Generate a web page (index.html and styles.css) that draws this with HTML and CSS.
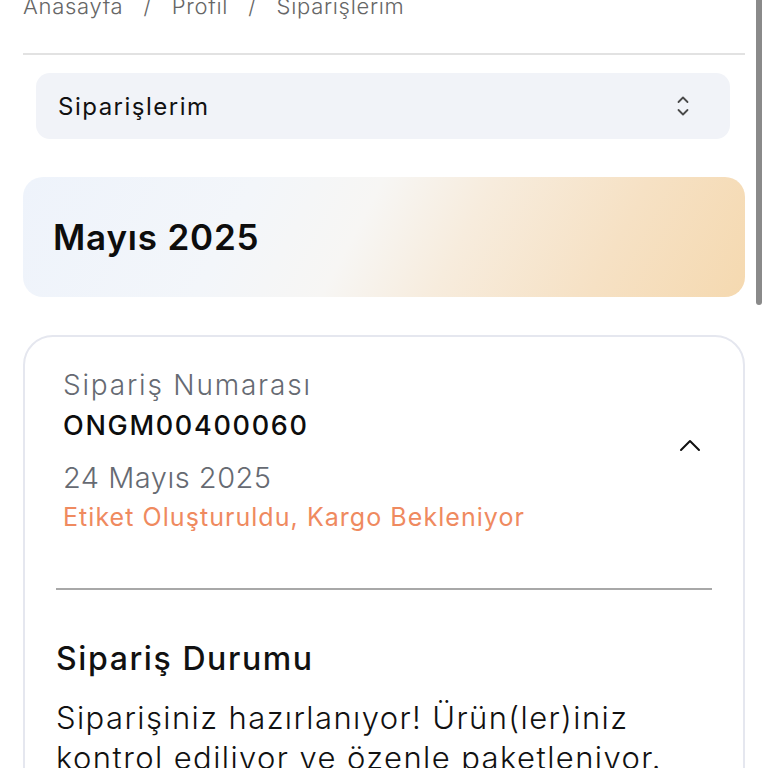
FILE: index.html
```html
<!DOCTYPE html>
<html lang="tr">
<head>
<meta charset="utf-8">
<title>Siparişlerim</title>
<link rel="stylesheet" href="styles.css">
</head>
<body>
<div class="page">
  <nav class="breadcrumb">
    <span>Anasayfa</span><span class="sep">/</span><span>Profil</span><span class="sep">/</span><span>Siparişlerim</span>
  </nav>
  <div class="rule"></div>
  <div class="select">
    <span class="select-label">Siparişlerim</span>
    <svg class="select-icon" width="14" height="24" viewBox="0 0 14 24" fill="none" stroke="#4a4a4a" stroke-width="1.8" stroke-linecap="round" stroke-linejoin="round"><path d="M2.5 8 L7 3.5 L11.5 8"/><path d="M2.5 16 L7 20.5 L11.5 16"/></svg>
  </div>
  <div class="month">Mayıs 2025</div>
  <section class="card">
    <div class="card-head">
      <div class="info">
        <div class="label">Sipariş Numarası</div>
        <div class="number">ONGM00400060</div>
        <div class="date">24 Mayıs 2025</div>
        <div class="status">Etiket Oluşturuldu, Kargo Bekleniyor</div>
      </div>
      <svg class="chev" width="22" height="14" viewBox="0 0 22 14" fill="none" stroke="#111" stroke-width="2" stroke-linecap="round" stroke-linejoin="round"><path d="M2 12 L11 3 L20 12"/></svg>
    </div>
    <div class="divider"></div>
    <div class="card-body">
      <h2 class="body-title">Sipariş Durumu</h2>
      <p class="body-text">Siparişiniz hazırlanıyor! Ürün(ler)iniz kontrol ediliyor ve özenle paketleniyor.</p>
    </div>
  </section>
</div>
<div class="scroll-thumb"></div>
</body>
</html>
```
FILE: styles.css
```css
html, body {
  margin: 0;
  padding: 0;
  overflow: hidden;
  background: #ffffff;
}
body {
  font-family: Inter, "Noto Sans", sans-serif;
  color: #111;
}
.page {
  padding: 0 23px;
  width: 722px;
}
.breadcrumb {
  display: flex;
  gap: 20px;
  height: 28px;
  font-size: 22px;
  line-height: 28px;
  letter-spacing: 0.7px;
  color: #666;
  margin-top: -8px;
  font-weight: 300;
}
.rule {
  margin-top: 33px;
  height: 2px;
  background: #e2e2e2;
}
.select {
  margin: 18px 15px 0 13px;
  height: 66px;
  background: #f1f3f8;
  border-radius: 14px;
  display: flex;
  align-items: center;
  justify-content: space-between;
  padding: 0 40px 0 22px;
}
.select-label {
  font-size: 24px;
  letter-spacing: 1.5px;
  color: #111;
}
.select-icon {
  display: block;
}
.month {
  margin-top: 38px;
  height: 120px;
  border-radius: 20px;
  background: linear-gradient(118deg, #eef3fb 0%, #f3f6fa 30%, #f7f6f4 46%, #f7ecdd 60%, #f6e1c4 80%, #f5d9b0 100%);
  display: flex;
  align-items: center;
  padding-left: 30px;
  font-size: 35px;
  letter-spacing: 0.8px;
  font-weight: 600;
  color: #0d0d0d;
}
.card {
  margin-top: 38px;
  border: 2px solid #e5e7ef;
  border-radius: 30px;
  height: 600px;
}
.card-head {
  display: flex;
  align-items: center;
  justify-content: space-between;
  padding: 28px 42px 0 38px;
}
.info {
  display: flex;
  flex-direction: column;
}
.label {
  font-size: 28px;
  letter-spacing: 1.8px;
  line-height: 40px;
  color: #666a72;
  font-weight: 300;
}
.number {
  font-size: 27px;
  letter-spacing: 1.7px;
  line-height: 42px;
  font-weight: 500;
  color: #0d0d0d;
}
.date {
  font-size: 29px;
  letter-spacing: 0.5px;
  line-height: 62px;
  color: #666a72;
  font-weight: 300;
}
.status {
  font-size: 25px;
  letter-spacing: 1.05px;
  line-height: 16px;
  color: #ef8a5f;
}
.chev {
  display: block;
}
.divider {
  margin: 63px 31px 0 31px;
  height: 2px;
  background: #a8a8a8;
}
.card-body {
  padding: 0 31px;
}
.body-title {
  margin: 48px 0 0;
  font-size: 32px;
  letter-spacing: 1.6px;
  line-height: 42px;
  font-weight: 500;
}
.body-text {
  margin: 18px 0 0;
  font-size: 31px;
  letter-spacing: 1.4px;
  line-height: 40px;
  font-weight: 300;
  color: #111;
}
.scroll-thumb {
  position: fixed;
  top: 0;
  right: 6px;
  width: 6px;
  height: 305px;
  background: #8a8a8a;
  border-radius: 0 0 3px 3px;
}
```
